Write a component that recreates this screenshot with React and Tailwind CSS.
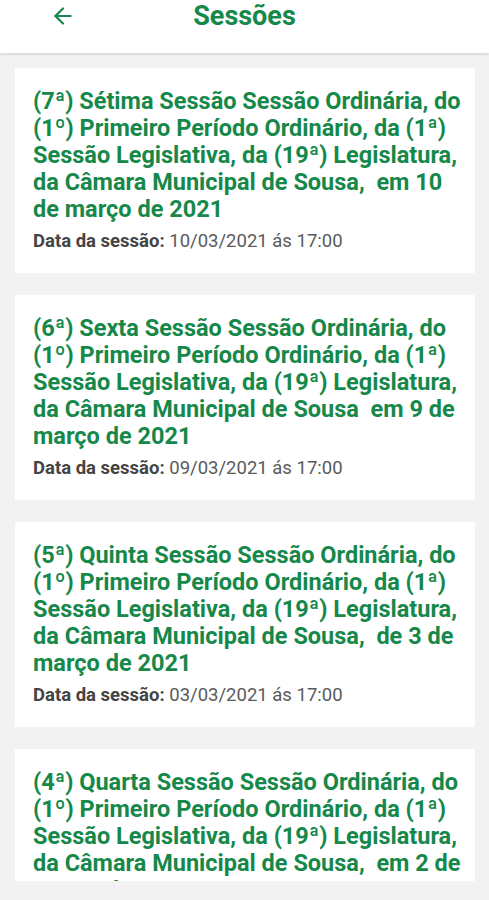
import React from 'react';
import { ArrowLeft } from 'lucide-react';

const sessions = [
    {
        title: '(7ª) Sétima Sessão Sessão Ordinária, do (1º) Primeiro Período Ordinário, da (1ª) Sessão Legislativa, da (19ª) Legislatura, da Câmara Municipal de Sousa,  em 10 de março de 2021',
        date: '10/03/2021 ás 17:00',
    },
    {
        title: '(6ª) Sexta Sessão Sessão Ordinária, do (1º) Primeiro Período Ordinário, da (1ª) Sessão Legislativa, da (19ª) Legislatura, da Câmara Municipal de Sousa  em 9 de março de 2021',
        date: '09/03/2021 ás 17:00',
    },
    {
        title: '(5ª) Quinta Sessão Sessão Ordinária, do (1º) Primeiro Período Ordinário, da (1ª) Sessão Legislativa, da (19ª) Legislatura, da Câmara Municipal de Sousa,  de 3 de março de 2021',
        date: '03/03/2021 ás 17:00',
    },
    {
        title: '(4ª) Quarta Sessão Sessão Ordinária, do (1º) Primeiro Período Ordinário, da (1ª) Sessão Legislativa, da (19ª) Legislatura, da Câmara Municipal de Sousa,  em 2 de março de 2021',
        date: '02/03/2021 ás 17:00',
    },
];

const SessionCard = ({ title, date }) => (
    <div className="bg-white pl-[18px] pr-[12px] pt-[20px] pb-[20px] shrink-0">
        <h2 className="text-[23.5px] leading-[27px] font-bold text-[#15884a] whitespace-pre-wrap">{title}</h2>
        <p className="mt-[6px] text-[18.5px] leading-[24px] text-[#5a5a5a]">
            <span className="font-bold text-[#444]">Data da sessão:</span> {date}
        </p>
    </div>
);

const App = () => {
    return (
        <div className="w-[489px] h-[900px] overflow-hidden bg-[#f2f2f2] font-['Roboto',sans-serif]">
            {/* Header */}
            <header className="h-[53px] bg-white shadow-[0_1px_3px_rgba(0,0,0,0.15)] relative z-10 flex items-start">
                <button className="ml-[49px] mt-[3px] p-0 text-[#15884a]">
                    <ArrowLeft className="w-[28px] h-[26px]" strokeWidth={2} />
                </button>
                <h1 className="absolute left-0 right-0 top-0 text-center text-[27px] leading-[32px] font-bold text-[#15884a]">
                    Sessões
                </h1>
            </header>

            {/* List */}
            <div className="h-[828px] overflow-hidden flex flex-col gap-[22px] px-[15px] pt-[15px] mr-[-1px]">
                {sessions.map((s, i) => (
                    <SessionCard key={i} title={s.title} date={s.date} />
                ))}
            </div>
        </div>
    );
};

export default App;
